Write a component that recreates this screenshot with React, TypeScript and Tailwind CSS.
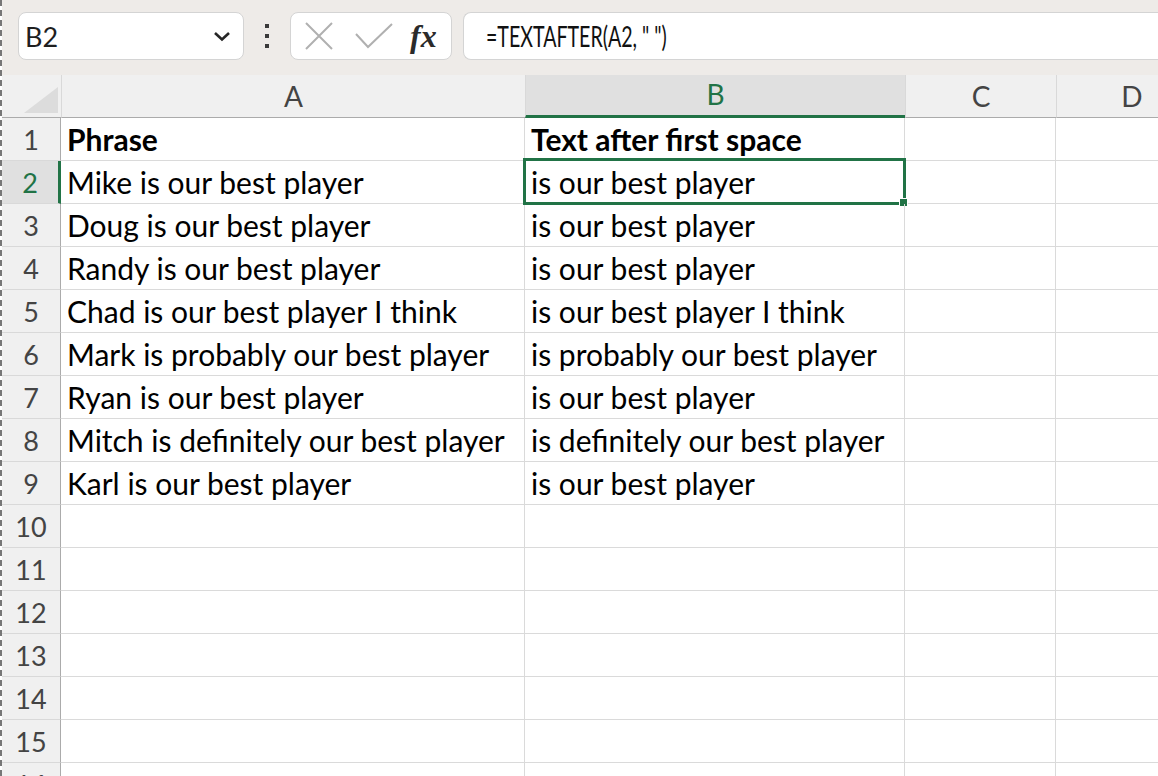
import React from "react";

const ROWS: [string, string][] = [
  ["Phrase", "Text after first space"],
  ["Mike is our best player", "is our best player"],
  ["Doug is our best player", "is our best player"],
  ["Randy is our best player", "is our best player"],
  ["Chad is our best player I think", "is our best player I think"],
  ["Mark is probably our best player", "is probably our best player"],
  ["Ryan is our best player", "is our best player"],
  ["Mitch is definitely our best player", "is definitely our best player"],
  ["Karl is our best player", "is our best player"],
  ["", ""],
  ["", ""],
  ["", ""],
  ["", ""],
  ["", ""],
  ["", ""],
  ["", ""],
];

const font = { fontFamily: "Lato, 'Open Sans', sans-serif" };

const Toolbar = () => (
  <div className="flex h-[75px] items-center bg-[#eeebe8] pl-[16px] pb-[3px]">
    <div className="flex h-[48px] w-[226px] items-center justify-between rounded-lg border border-[#d4d4d4] bg-white pl-[6px] pr-[12px]">
      <span className="text-[27px] leading-none text-[#1f1f1f]">B2</span>
      <svg width="18" height="12" viewBox="0 0 18 12">
        <path d="M2 3 L9 9.5 L16 3" fill="none" stroke="#262626" strokeWidth="2.6" />
      </svg>
    </div>
    <div className="flex w-[46px] flex-col items-center gap-[6px]">
      <div className="h-[4px] w-[4px] bg-[#3a3a3a]" />
      <div className="h-[4px] w-[4px] bg-[#3a3a3a]" />
      <div className="h-[4px] w-[4px] bg-[#3a3a3a]" />
    </div>
    <div className="flex h-[48px] w-[162px] items-center rounded-lg border border-[#d4d4d4] bg-white pl-[14px]">
      <svg width="28" height="28" viewBox="0 0 28 28">
        <path d="M1 1 L27 27 M27 1 L1 27" stroke="#b0b0b0" strokeWidth="2" />
      </svg>
      <svg width="38" height="28" viewBox="0 0 38 28" className="ml-[22px]">
        <path d="M1 12 L13 25 L37 2" fill="none" stroke="#b0b0b0" strokeWidth="2" />
      </svg>
      <span
        className="ml-[17px] text-[32px] italic font-bold leading-none text-[#2b2b2b]"
        style={{ fontFamily: "'Liberation Serif', 'DejaVu Serif', serif" }}
      >
        fx
      </span>
    </div>
    <div className="ml-[11px] flex h-[48px] flex-1 items-center overflow-hidden rounded-l-lg border border-r-0 border-[#d4d4d4] bg-white pl-[22px]">
      <span className="inline-block origin-left scale-x-[0.7] whitespace-nowrap text-[28px] leading-none text-[#111]">
        =TEXTAFTER(A2, " ")
      </span>
    </div>
  </div>
);

const colWidths = ["w-[59px]", "w-[464px]", "w-[380px]", "w-[151px]", "w-[151px]"];

const Header = () => (
  <div className="flex h-[43px] bg-[#f0f0f0]">
    <div className="relative w-[59px] shrink-0 border-b border-[#ababab]">
      <svg width="59" height="42" viewBox="0 0 59 42" className="absolute left-0 top-0">
        <path d="M22 38 L56 38 L56 12 Z" fill="#dcdcdc" />
      </svg>
    </div>
    {["A", "B", "C", "D"].map((c, i) => (
      <div
        key={c}
        className={`${colWidths[i + 1]} shrink-0 flex items-end justify-center pb-[7px] text-[28px] leading-none ${
          c === "B"
            ? "bg-[#e0e0e0] border-b-[3px] border-b-[#217346] text-[#217346]"
            : "border-b border-b-[#ababab] text-[#444]"
        } border-l border-l-[#d9d9d9]`}
      >
        {c}
      </div>
    ))}
  </div>
);

export default function App() {
  return (
    <div className="h-[776px] w-[1158px] overflow-hidden border-l-2 border-dashed border-l-[#777] bg-white" style={font}>
      <Toolbar />
      <Header />
      {ROWS.map(([a, b], i) => {
        const n = i + 1;
        const bold = n === 1;
        const active = n === 2;
        return (
          <div key={n} className="flex h-[43px]">
            <div
              className={`w-[59px] shrink-0 flex items-end justify-center pb-[7px] text-[27px] leading-none border-b border-b-[#d9d9d9] ${
                active
                  ? "bg-[#e0e0e0] text-[#217346] border-r-[3px] border-r-[#217346]"
                  : "bg-[#f0f0f0] text-[#444] border-r border-r-[#ababab]"
              }`}
            >
              {n}
            </div>
            <div
              className={`w-[464px] shrink-0 flex items-end whitespace-nowrap pl-[6px] pb-[6px] text-[30px] leading-none text-black border-b border-b-[#dadada] border-r border-r-[#dadada] ${
                bold ? "font-bold" : ""
              }`}
            >
              {a}
            </div>
            <div
              className={`relative w-[380px] shrink-0 flex items-end whitespace-nowrap pl-[6px] pb-[6px] text-[30px] leading-none text-black border-b border-b-[#dadada] border-r border-r-[#dadada] ${
                bold ? "font-bold" : ""
              }`}
            >
              {b}
              {active && (
                <>
                  <div className="absolute left-[-2px] right-[-2px] top-[-3px] bottom-[-2px] border-[3px] border-[#217346]" />
                  <div className="absolute right-[-4px] bottom-[-4px] h-[9px] w-[9px] border border-white bg-[#217346]" />
                </>
              )}
            </div>
            <div className="w-[151px] shrink-0 border-b border-b-[#dadada] border-r border-r-[#dadada]" />
            <div className="w-[151px] shrink-0 border-b border-b-[#dadada] border-r border-r-[#dadada]" />
          </div>
        );
      })}
    </div>
  );
}
